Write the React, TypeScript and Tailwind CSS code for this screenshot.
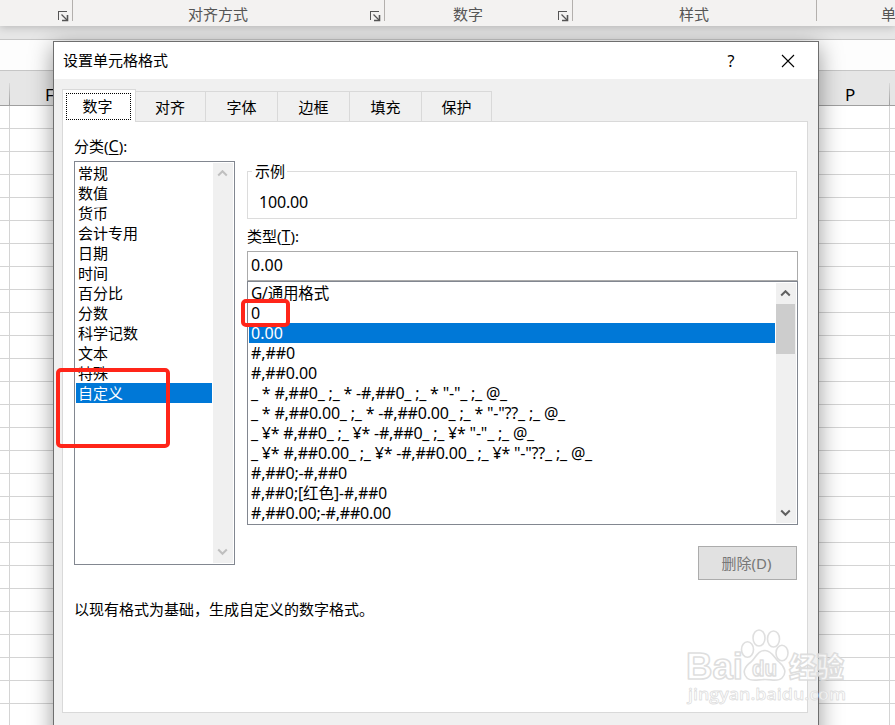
import React from "react";

const categories = ["常规", "数值", "货币", "会计专用", "日期", "时间", "百分比", "分数", "科学记数", "文本", "特殊", "自定义"];

const formats: { text: string; width?: number; cjk?: boolean }[] = [
  { text: "G/通用格式", width: 77, cjk: true },
  { text: "0" },
  { text: "0.00", width: 31 },
  { text: "#,##0", width: 43 },
  { text: "#,##0.00", width: 65 },
  { text: '_ * #,##0_ ;_ * -#,##0_ ;_ * "-"_ ;_ @_', width: 255 },
  { text: '_ * #,##0.00_ ;_ * -#,##0.00_ ;_ * "-"??_ ;_ @_', width: 313 },
  { text: '_ ¥* #,##0_ ;_ ¥* -#,##0_ ;_ ¥* "-"_ ;_ @_', width: 282 },
  { text: '_ ¥* #,##0.00_ ;_ ¥* -#,##0.00_ ;_ ¥* "-"??_ ;_ @_', width: 340 },
  { text: "#,##0;-#,##0", width: 95 },
  { text: "#,##0;[红色]-#,##0", width: 135, cjk: true },
  { text: "#,##0.00;-#,##0.00", width: 139 },
];

const tabs = [
  { label: "对齐", cls: "w-[70px] pr-[1px]" },
  { label: "字体", cls: "w-[72px]" },
  { label: "边框", cls: "w-[72px]" },
  { label: "填充", cls: "w-[72px]" },
  { label: "保护", cls: "w-[70px]" },
];

function Launcher() {
  return (
    <svg width="11" height="11" viewBox="0 0 11 11" fill="none" stroke="#555" className="mt-[11px] shrink-0" shapeRendering="crispEdges">
      <path d="M.5 9V.5H9" />
      <path d="M3.500 3.500L9 9" shapeRendering="auto" strokeWidth="1.3" />
      <path d="M4 9.500H9.500V4" strokeWidth="1.6" shapeRendering="auto" />
    </svg>
  );
}

function Chevron({ down, color }: { down?: boolean; color: string }) {
  return (
    <svg className="mr-[2px]" width="11" height="8" viewBox="0 0 11 8" fill="none" stroke={color} strokeWidth="2">
      <path d={down ? "M1.200 1.500L5.500 5.800L9.800 1.500" : "M1.200 5.500L5.500 1.200L9.800 5.500"} />
    </svg>
  );
}

/* Text run spread to a fixed advance so that rows keep the dialog font's metrics. */
function Run({ text, width, cjk }: { text: string; width?: number; cjk?: boolean }) {
  const ref = React.useRef<HTMLSpanElement>(null);
  const [spacing, setSpacing] = React.useState(0);
  React.useLayoutEffect(() => {
    if (ref.current && width) {
      const w = ref.current.getBoundingClientRect().width;
      setSpacing((width + 1 - w) / text.length);
    }
  }, [text, width]);
  return (
    <span ref={ref} className={`whitespace-pre ${cjk ? "text-[15.5px]" : "text-[16px]"}`} style={{ letterSpacing: spacing }}>
      {text}
    </span>
  );
}

function Ribbon() {
  return (
    <div className="relative z-20 flex h-[26px] shrink-0 bg-[#f3f2f1] text-[#555] shadow-[0_1px_8px_rgba(0,0,0,0.22)]">
      <div className="flex h-[21px] w-[73px] justify-end border-r border-[#b3b0ad] pr-[3px]"><Launcher /></div>
      <div className="flex h-[21px] w-[312px] border-r border-[#b3b0ad] pr-[3px]">
        <span className="flex-1 pl-[115px] pt-[3px] leading-[22px]">对齐方式</span><Launcher />
      </div>
      <div className="flex h-[21px] w-[188px] border-r border-[#b3b0ad] pr-[3px]">
        <span className="flex-1 pl-[68px] pt-[3px] leading-[22px]">数字</span><Launcher />
      </div>
      <div className="h-[21px] w-[244px] border-r border-[#b3b0ad] pl-[106px] pt-[3px] leading-[22px]">样式</div>
      <div className="w-[78px] overflow-hidden whitespace-nowrap pl-[64px] pt-[3px] leading-[22px]">单</div>
    </div>
  );
}

function Sheet() {
  return (
    <>
      <div className="h-[13px] shrink-0 bg-[#e6e6e6]" />
      <div className="h-[32px] shrink-0 border-y border-[#c6c6c6] bg-[#fdfdfd]" />
      <div className="flex h-[35px] shrink-0 border-b border-[#9f9f9f] bg-[#e6e6e6] text-[17px] text-black">
        <div className="flex w-[10px] items-end justify-end"><i className="h-[22px] w-px bg-linear-to-b from-[#d8d8d8] to-[#9f9f9f]" /></div>
        <div className="w-[800px] pl-[35px] pt-[12px] leading-[24px]">F</div>
        <div className="w-[79px] pl-[35px] pt-[12px] leading-[24px]">P</div>
        <div className="flex w-px items-end"><i className="h-[22px] w-px bg-linear-to-b from-[#d8d8d8] to-[#9f9f9f]" /></div>
      </div>
      <div>
        {Array.from({ length: 27 }, (_, i) => (
          <div key={i} className="flex h-[23px] border-b border-[#d4d4d4] bg-white">
            <div className="w-[10px] border-r border-[#d4d4d4]" />
            <div className="w-[880px] border-r border-[#d4d4d4]" />
          </div>
        ))}
      </div>
    </>
  );
}

function Watermark() {
  return (
    <svg className="absolute left-[680px] top-[622px] z-40" width="180" height="90" viewBox="0 0 180 90">
      <g fill="#fff" fillOpacity=".7" stroke="#d9d9d9" strokeOpacity=".85" strokeWidth="1.6" fontFamily="'Liberation Sans','Noto Sans CJK SC',sans-serif" fontWeight="700" strokeLinejoin="round">
        <ellipse cx="67.500" cy="27.500" rx="6" ry="7.700" />
        <ellipse cx="79" cy="16" rx="6" ry="8" />
        <ellipse cx="93.500" cy="17" rx="6" ry="8" />
        <ellipse cx="102" cy="31" rx="6" ry="7.700" />
        <path d="M85 28.500C77 28.500 76 36 71 40C64 45 62 51 67 56C71 60 78 57.500 85 57.500S98 60 102 56C107 51 105 45 99 40C94 36 92 28.500 85 28.500Z" />
        <text x="6" y="57" fontSize="36" textLength="57" lengthAdjust="spacingAndGlyphs">Bai</text>
        <text x="72" y="54" fontSize="22" textLength="25" lengthAdjust="spacingAndGlyphs">du</text>
        <text x="109" y="56" fontSize="28" fontWeight="900" textLength="55" lengthAdjust="spacingAndGlyphs">经验</text>
        <text x="8" y="78" fontSize="17" fontWeight="600" fontFamily="'Open Sans',sans-serif" strokeWidth=".8" textLength="158" lengthAdjust="spacingAndGlyphs">jingyan.baidu.com</text>
      </g>
    </svg>
  );
}

function CategoryList() {
  return (
    <div className="flex h-[404px] w-[161px] border border-[#828790] p-px">
      <div className="w-[136px]">
        {categories.map((c) => (
          <div key={c} className={`h-[20px] pl-[2px] leading-[20px] ${c === "自定义" ? "bg-[#0078d7] text-white" : ""}`}>{c}</div>
        ))}
      </div>
      <div className="ml-[1px] flex w-[20px] flex-col items-center justify-between bg-[#f0f0f0] py-[7px]">
        <Chevron color="#bfbfbf" />
        <Chevron down color="#bfbfbf" />
      </div>
    </div>
  );
}

function FormatList() {
  return (
    <div className="flex h-[244px] w-[551px] border border-[#828790] p-px">
      <div className="w-[526px]">
        {formats.map((f) => (
          <div key={f.text} className={`h-[20px] pl-[2px] leading-[21px] ${f.text === "0.00" ? "bg-[#0078d7] text-white" : ""}`}>
            <Run {...f} />
          </div>
        ))}
      </div>
      <div className="ml-[1px] flex w-[20px] flex-col bg-[#f0f0f0]">
        <div className="flex h-[21px] items-center justify-center"><Chevron color="#606060" /></div>
        <div className="h-[50px] w-[19px] bg-[#cdcdcd]" />
        <div className="flex flex-1 items-end justify-center pb-[6px]"><Chevron down color="#606060" /></div>
      </div>
    </div>
  );
}

function Dialog() {
  return (
    <div className="absolute left-[53px] top-[41px] z-10 flex h-[720px] w-[766px] flex-col border border-[#6e6e6e] bg-[#f0f0f0] text-black shadow-[0_5px_22px_rgba(0,0,0,0.4)]">
      <div className="flex h-[37px] shrink-0 items-center bg-white pl-[9px]">
        <span className="flex-1">设置单元格格式</span>
        <span className="w-[10px] text-center text-[16px]">?</span>
        <svg className="ml-[45px] mr-[23px]" width="14" height="14" viewBox="0 0 14 14" stroke="#000" strokeWidth="1.1"><path d="M1 1L13 13M13 1L1 13" /></svg>
      </div>
      <div className="flex h-[42px] shrink-0 items-end pl-[8px]">
        <div className="z-10 flex h-[32px] w-[74px] border border-b-0 border-[#d9d9d9] bg-white pl-[3px] pt-[3px]">
          <div className="h-[27px] w-[65px] border border-dotted border-black pr-[2px] text-center leading-[25px]">数字</div>
        </div>
        {tabs.map((t) => (
          <div key={t.label} className={`h-[30px] border-r border-t border-[#d9d9d9] text-center leading-[31px] ${t.cls}`}>{t.label}</div>
        ))}
      </div>
      <div className="relative ml-[8px] flex h-[592px] w-[746px] shrink-0 flex-col border border-[#d9d9d9] bg-white pl-[11px]">
        <i className="absolute -top-px left-0 h-px w-[72px] bg-white" />
        <div className="flex">
          <div className="w-[173px] pt-[13px]">
            <div className="h-[26px] leading-[22px]">分类(<u className="text-[16px] underline-offset-2">C</u>):</div>
            <CategoryList />
          </div>
          <div className="w-[551px] pt-[38px]">
            <div className="-mt-px h-[12px]" />
            <fieldset className="h-[48px] w-[550px] border border-[#dcdcdc]">
              <legend className="-mt-[1px] ml-[4px] h-0 px-[2px] leading-none"><span className="relative -top-[8px] block h-[15px] bg-white pl-px">示例</span></legend>
              <div className="pl-[11px] pt-[18px] leading-[24px]"><Run text="100.00" width={48} /></div>
            </fieldset>
            <div className="h-[32px] pt-[6px] leading-[22px]">类型(<u className="text-[16px] underline-offset-2">T</u>):</div>
            <div className="h-[30px] border border-[#ababab] pl-[3px] leading-[26px]"><Run text="0.00" width={31} /></div>
            <FormatList />
            <div className="mr-px mt-[21px] flex justify-end">
              <button className="h-[34px] w-[99px] border border-[#acacac] bg-[#e1e1e1] pr-[2px] leading-[32px] text-[#777]">删除(D)</button>
            </div>
          </div>
        </div>
        <div className="mt-[18px] leading-[22px]">以现有格式为基础，生成自定义的数字格式。</div>
      </div>
    </div>
  );
}

export default function App() {
  return (
    <div className="relative flex h-[725px] w-[895px] flex-col overflow-hidden bg-white font-['Noto_Sans','Noto_Sans_CJK_SC',sans-serif] text-[15px]">
      <Ribbon />
      <Sheet />
      <Dialog />
      <div className="absolute left-[241px] top-[299px] z-30 h-[28px] w-[49px] rounded-[5px] border-4 border-[#ff2519]" />
      <div className="absolute left-[56px] top-[368px] z-30 h-[80px] w-[114px] rounded-[5px] border-4 border-[#ff2519]" />
      <Watermark />
    </div>
  );
}
